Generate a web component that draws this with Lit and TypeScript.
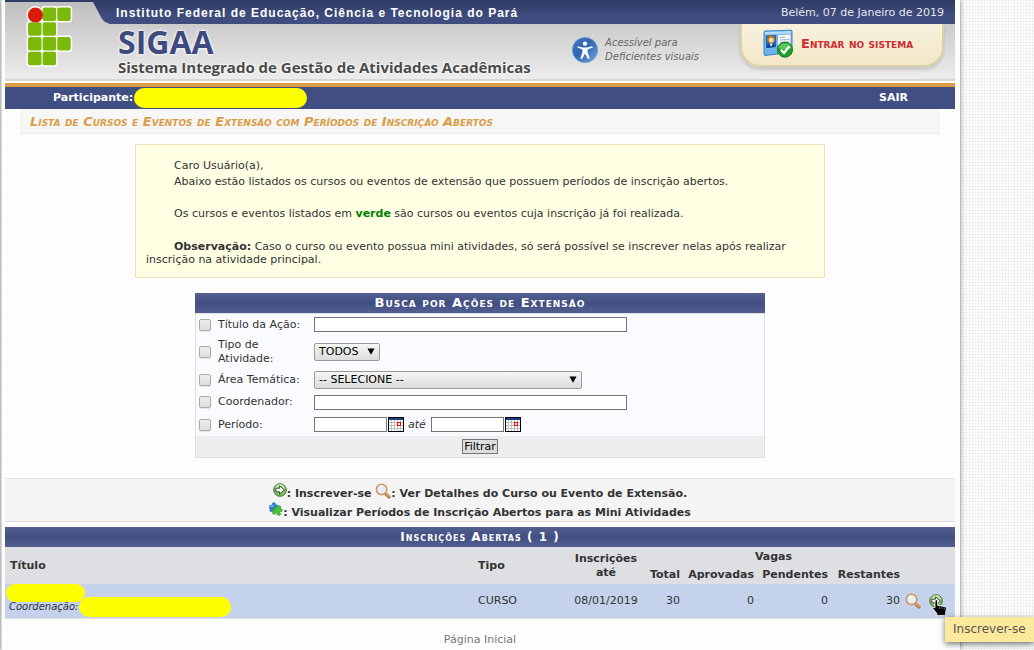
import { LitElement, html, svg, css } from "lit";
import { customElement } from "lit/decorators.js";

const arrowIcon = html`<svg class="icon" viewBox="0 0 14 14" width="14" height="14" aria-hidden="true">
  <circle cx="7" cy="7" r="6.3" fill="#7fc35e" stroke="#4d6b40" stroke-width="1" />
  <path d="M2 6 A5 5 0 0 1 12 6 Q7 4 2 6Z" fill="#b8e3a0" />
  <path d="M2.8 5.2H6.6V2.8L11.4 7L6.6 11.2V8.8H2.8Z" fill="#f4f8f2" stroke="#454d42" stroke-width="1" />
</svg>`;

const magnifierIcon = html`<svg class="icon" viewBox="0 0 16 16" width="16" height="16" aria-hidden="true">
  <path d="M10.4 10.6L14 14" stroke="#b5733a" stroke-width="3.2" stroke-linecap="round" />
  <path d="M11 10.8L14 13.6" stroke="#e6b27c" stroke-width="1.2" stroke-linecap="round" />
  <circle cx="6.6" cy="6.4" r="5.2" fill="#e9eef5" stroke="#cf9663" stroke-width="1.6" />
  <path d="M3.6 5.6A3.4 3.4 0 0 1 7 3" fill="none" stroke="#fff" stroke-width="1.2" />
</svg>`;

const puzzleIcon = html`<svg class="icon" viewBox="0 0 14 14" width="14" height="14" aria-hidden="true">
  <path d="M.5 3.5L3.5 3Q2.8.8 4.8.5Q6.8.6 6.2 2.6L9 3.3L8.5 8L6 9L1.2 9.8L.6 6Z" fill="#2f7fd0" stroke="#2465ad" stroke-width=".5" />
  <path d="M1.4 4.2L5 3.9" stroke="#8cc4f3" />
  <path d="M6.4 4.6L8.9 5.4Q9.1 3.4 11 3.8Q12.6 4.8 11.2 6.4L13.6 7.6L12.3 9.8Q11 8.9 10.3 10Q10.3 11.3 11.8 11.6L10.8 13.5L7.8 12.3Q8 10.4 6.6 10.8Q5.6 11.2 6 12.5L3.4 11.4L4.4 9Q3 8 3.9 6.9Q5 6 6 7.2Z" fill="#48c335" stroke="#2c8b25" stroke-width=".6" />
</svg>`;

const calendarIcon = html`<svg class="icon" viewBox="0 0 16 15" width="16" height="15" shape-rendering="crispEdges" aria-hidden="true">
  <rect width="16" height="15" fill="#000" />
  <rect x="1" y="1" width="14" height="2" fill="#1c3f80" />
  <rect x="1" y="3" width="14" height="11" fill="#fff" />
  <path d="M3.5 3V14M6.5 3V14M9.5 3V14M12.5 3V14M1 5.5H15M1 8.5H15M1 11.5H15" stroke="#c0c0c0" />
  <rect x="9.5" y="5.5" width="3" height="3" fill="#fff" stroke="#f00" />
</svg>`;

const squares: number[][] = [
  [42.6, 7.4], [57.2, 7.4],
  [28, 22.3], [42.6, 22.3],
  [28, 37], [42.6, 37], [57.2, 37],
  [28, 51.7], [42.6, 51.7],
];

const logo = html`<svg class="logo" viewBox="25 4 50 64" width="50" height="64" role="img" aria-label="Instituto Federal">
  <g fill="#fff" stroke="#fff" stroke-width="3" stroke-linejoin="round">
    ${squares.map(([x, y]) => svg`<rect x=${x} y=${y} width="13.5" height="13.5" rx="2" />`)}
    <circle cx="35.4" cy="15" r="7.5" />
  </g>
  ${squares.map(([x, y]) => svg`<rect x=${x} y=${y} width="13.5" height="13.5" rx="2" fill="#7db90a" />`)}
  <circle cx="35.4" cy="15" r="7.6" fill="#d81e0a" />
</svg>`;

const accessIcon = html`<svg viewBox="0 0 26 26" width="26" height="26" aria-hidden="true">
  <defs><linearGradient id="ab" x1="0" y1="0" x2="1" y2="1">
    <stop offset="0" stop-color="#4279bd" /><stop offset=".45" stop-color="#2f66b0" /><stop offset="1" stop-color="#7aa8de" />
  </linearGradient></defs>
  <circle cx="13" cy="13" r="12.6" fill="url(#ab)" stroke="#6f9bd0" stroke-width=".8" />
  <circle cx="13" cy="6.6" r="2.2" fill="#fff" />
  <path d="M5.6 9.2L11 10.4H15L20.4 9.2L20.7 10.6L15.5 12.4L15.7 15.5L17.6 21.6L16 22.1L13 16.5L10 22.1L8.4 21.6L10.3 15.5L10.5 12.4L5.3 10.6Z" fill="#fff" />
</svg>`;

const badgeIcon = html`<svg viewBox="0 0 32 30" width="32" height="30" aria-hidden="true">
  <path d="M2 3Q2 2 3 2L29 1.2Q30 1.2 30 2V19Q30 21 28 21L16 22V25L3 26.5Q2 26.5 2 25Z" fill="#6cb2ef" stroke="#3c83cd" />
  <path d="M3 3L29 2V4.6L3 5.6Z" fill="#b5dcfa" />
  <path d="M4 6.5L14 6V18L4 19Z" fill="#1d68bb" />
  <path d="M16 6L28.5 5.4V19L16 20Z" fill="#f5f7fa" />
  <path d="M17.5 8.5L23 8M18 11L27.5 10.5M18 13.5L27.5 13" stroke="#a7afb9" />
  <circle cx="9" cy="10.2" r="4" fill="#b96c14" />
  <circle cx="9.3" cy="11" r="2.5" fill="#ffd9a3" />
  <path d="M4.6 19Q5 14.4 9 14.4Q13 14.4 13.4 18Z" fill="#12458d" />
  <path d="M7.6 14.4L9.2 18L10.6 14.4Z" fill="#fff" />
  <circle cx="23" cy="20.7" r="7.6" fill="#1d9c28" stroke="#0e7119" stroke-width=".8" />
  <path d="M16.5 19A6.8 6.8 0 0 1 29.5 19Q23 22 16.5 19Z" fill="#5ac95a" />
  <path d="M19 20.7L22 24L27.4 17.2" fill="none" stroke="#fff" stroke-width="2.4" />
</svg>`;

const handCursor = html`<svg class="cursor" viewBox="0 0 15 17" width="15" height="17" aria-hidden="true">
  <path d="M3 1.5Q4.5 0 5.6 1.6V6.4L13 7.6Q14.5 8 14.4 9.6L13.6 14V16.4H4.8V14.4L.8 9.6Q1 7.6 3 8.8Z" fill="#000" stroke="#fff" stroke-width=".8" />
  <path d="M7.5 10V7.5M10 10.3V7.8M12.3 10.6V8.4" stroke="#999" stroke-width=".6" />
</svg>`;

@customElement("app-root")
export class AppRoot extends LitElement {
  static styles = css`
    :host {
      display: block;
      box-sizing: border-box;
      min-height: 100vh;
      padding: 0 74px 0 1px;
      overflow: hidden;
      font: 11px/14px "DejaVu Sans", Verdana, sans-serif;
      color: #333;
      background:
        repeating-linear-gradient(90deg, rgba(0, 0, 0, 0.04) 0 1px, transparent 1px 3px, rgba(0, 0, 0, 0.03) 3px 4px, transparent 4px 6px),
        repeating-linear-gradient(rgba(0, 0, 0, 0.04) 0 1px, transparent 1px 3px, rgba(0, 0, 0, 0.03) 3px 4px, transparent 4px 6px),
        #fdfdfd;
    }
    a { color: inherit; text-decoration: none; }
    .page {
      box-sizing: border-box;
      min-height: 100vh;
      padding: 0 5px 0 3px;
      border-left: 1px solid #d8d8d8;
      background: #fdfdfd;
      box-shadow: 0 0 5px rgba(0, 0, 0, 0.5);
    }
    .header {
      display: grid;
      grid-template-columns: 88px 1fr;
      border-top: 2px solid #2f3c66;
      box-sizing: border-box;
      height: 81px;
      border-bottom: 2px solid #d6d6d6;
      background: linear-gradient(#bfbfbf, #ececec);
    }
    .logo { margin: 2px 0 0 20px; }
    .topbar {
      display: flex;
      justify-content: space-between;
      align-items: center;
      height: 22px;
      padding: 0 11px 0 23px;
      color: #e4e6ee;
      background: linear-gradient(#303d66, #3e4b7d 60%, #404d80);
      clip-path: polygon(0 0, 100% 0, 100% 100%, 17px 100%, 12px 20px, 9px 17px);
    }
    .institute { font: bold 12px/20px "Liberation Sans", Arial, sans-serif; letter-spacing: 1px; color: #fff; }
    .brandrow { display: flex; align-items: flex-start; padding: 0 11px 0 25px; }
    .brand { flex: 1; font-family: "Open Sans", "Noto Sans", sans-serif; font-weight: 700; }
    .sigaa { margin: 0; font-size: 32px; line-height: 36px; color: #3e4a7e; text-shadow: 0 0 3px #fff, 0 0 3px #fff; }
    .subtitle { margin: 0; font-size: 15px; line-height: 14px; color: #4a4a4a; white-space: nowrap; text-shadow: 0 0 3px #fff, 0 0 3px #fff; }
    .access { display: flex; align-items: center; gap: 7px; margin: 12px 41px 0 0; font-style: italic; font-size: 10px; color: #666; }
    .login {
      display: flex;
      align-items: center;
      box-sizing: border-box;
      width: 204px;
      height: 43px;
      gap: 7px;
      padding: 0 0 2px 20px;
      border: 2px solid #ddd0a4;
      border-top: 0;
      border-radius: 0 0 20px 20px;
      background: linear-gradient(#f8f1dd, #f2e7c6);
      box-shadow: 0 3px 3px rgba(0, 0, 0, 0.12);
      font-size: 13px;
      font-weight: bold;
      font-variant: small-caps;
      color: #cc2c31;
    }
    .userbar {
      display: flex;
      justify-content: space-between;
      align-items: center;
      height: 22px;
      margin-top: 2px;
      padding: 0 47px 0 48px;
      border-top: 4px solid #d99d45;
      background: #404e82;
      color: #fff;
      font-weight: bold;
    }
    .who { display: flex; align-items: center; gap: 1px; }
    .mask { display: block; height: 20px; border-radius: 10px; background: #ff0; }
    .w-user { width: 173px; }
    .w-title { width: 79px; }
    .w-coord { width: 152px; }
    .pagetitle {
      margin: 0 15px;
      padding: 1px 10px 0;
      font-size: 13px;
      line-height: 23px;
      font-style: italic;
      font-variant: small-caps;
      color: #d99d45;
      background: #f7f7f7;
      border-bottom: 1px solid #ebebeb;
    }
    .notice {
      margin: 10px 130px 15px;
      padding: 13px 10px 11px;
      border: 1px solid #f0dfb8;
      background: #ffffe4;
    }
    .notice p { margin: 0 0 16px; text-indent: 28px; line-height: 16px; }
    .notice .greet { margin: 0; }
    .notice .obs { margin: 0; line-height: 13px; padding-top: 2px; }
    .green { color: #008000; }
    .bar {
      height: 20px;
      line-height: 20px;
      margin: 0;
      font-size: 12px;
      font-weight: bold;
      font-variant: small-caps;
      letter-spacing: 1px;
      text-align: center;
      color: #fff;
      background: linear-gradient(#53608f, #404e82 50%, #53608f);
    }
    .bar.large { font-size: 13px; }
    .search { margin: 0 190px 20px; }
    .fields {
      display: grid;
      grid-template-columns: 12px 89px 1fr;
      grid-template-rows: 21px 33px 23px 22px 23px;
      column-gap: 7px;
      align-items: center;
      padding: 0 3px;
      background: #fafbfe;
      border: solid #dedfe3;
      border-width: 1px 1px 0;
    }
    input, select, button { font: inherit; color: #000; margin: 0; box-sizing: border-box; }
    .check {
      appearance: none;
      width: 12px;
      height: 12px;
      border: 1px solid #ababab;
      border-radius: 2px;
      background: linear-gradient(#ececec, #dedede);
      box-shadow: 0 1px 1px rgba(0, 0, 0, 0.1);
    }
    .text { width: 313px; height: 15px; padding: 0 1px; border: 1px solid #757575; border-radius: 0; background: #fff; }
    .date { width: 73px; }
    .pick { position: relative; display: block; width: 66px; height: 18px; }
    .pick.wide { width: 268px; }
    .pick select {
      appearance: none;
      width: 100%;
      height: 100%;
      padding: 0 4px;
      border: 1px solid #999;
      border-radius: 2px;
      background: linear-gradient(#f6f6f6, #dcdcdc);
    }
    .pick svg { position: absolute; right: 5px; top: 5px; pointer-events: none; }
    .period { display: flex; align-items: center; gap: 1px; }
    .period em { margin: 0 4px 0 3px; }
    .iconbtn { display: block; padding: 0; border: 0; background: none; line-height: 0; }
    .icon { display: inline-block; }
    .submit {
      display: flex;
      justify-content: center;
      align-items: center;
      height: 21px;
      background: #eee;
      border: solid #dedfe3;
      border-width: 0 1px 1px;
    }
    .filter { height: 15px; padding: 0 1px; line-height: 13px; border: 1px solid #757575; background: #ddd; }
    .legend {
      margin-bottom: 5px;
      padding: 4px 0 0;
      font-weight: bold;
      line-height: 21px;
      background: #f4f4f4;
      border: solid #dedfe3;
      border-width: 1px 0;
    }
    .legend .line { display: flex; justify-content: center; height: 19px; white-space: pre; }
    .list { width: 100%; border-collapse: collapse; table-layout: fixed; }
    .list th, .list td { padding: 0 4px; }
    .list thead { background: #dedfe3; }
    .list th { text-align: right; }
    .list th.left { text-align: left; padding-left: 5px; }
    .list .center { text-align: center; }
    .list .first { height: 19px; }
    .list .second { height: 18px; }
    .list tbody td { height: 34px; text-align: right; background: #c4d2eb; border-bottom: 1px solid #dedfe3; }
    .list tbody td.name { text-align: left; padding: 0 0 0 1px; vertical-align: top; }
    .list tbody td.left { text-align: left; padding-left: 5px; }
    .list tbody td.center { text-align: center; }
    .list tbody td.act { padding: 0 0 0 1px; }
    .name .stack { display: flex; flex-direction: column; height: 33px; }
    .coord { display: flex; align-items: center; gap: 1px; height: 20px; margin-top: -5px; padding-left: 3px; font-style: italic; font-size: 10px; }
    .c-type { width: 96px; }
    .c-until { width: 74px; }
    .c-total { width: 41px; }
    .c-appr { width: 74px; }
    .c-pend { width: 74px; }
    .c-rest { width: 72px; }
    .c-a { width: 24px; }
    .c-b { width: 27px; }
    .hover { position: relative; width: 14px; }
    .cursor { position: absolute; left: 3px; top: 5px; }
    .tip {
      position: absolute;
      left: 16px;
      top: 23px;
      padding: 0 8px;
      font-size: 12px;
      line-height: 25px;
      white-space: nowrap;
      color: #555;
      background: #fde99c;
      box-shadow: 0 2px 6px rgba(0, 0, 0, 0.55);
    }
    .foot { margin-top: 14px; text-align: center; color: #777; }
  `;

  private arrow() {
    return html`<svg width="8" height="7" viewBox="0 0 8 7" aria-hidden="true"><path d="M.5 .5H7.5L4 6.8Z" fill="#000" /></svg>`;
  }

  render() {
    return html`<div class="page">
      <header>
        <div class="header">
          ${logo}
          <div>
            <div class="topbar">
              <span class="institute">Instituto Federal de Educação, Ciência e Tecnologia do Pará</span>
              <span>Belém, 07 de Janeiro de 2019</span>
            </div>
            <div class="brandrow">
              <div class="brand">
                <h1 class="sigaa">SIGAA</h1>
                <p class="subtitle">Sistema Integrado de Gestão de Atividades Acadêmicas</p>
              </div>
              <a class="access" href="#acessivel">${accessIcon}<span>Acessível para<br />Deficientes visuais</span></a>
              <a class="login" href="#entrar">${badgeIcon}<span>Entrar no sistema</span></a>
            </div>
          </div>
        </div>
        <div class="userbar">
          <span class="who">Participante:<span class="mask w-user"></span></span>
          <a href="#sair">SAIR</a>
        </div>
      </header>
      <main>
        <h2 class="pagetitle">Lista de Cursos e Eventos de Extensão com Períodos de Inscrição Abertos</h2>
        <section class="notice">
          <p class="greet">Caro Usuário(a),</p>
          <p>Abaixo estão listados os cursos ou eventos de extensão que possuem períodos de inscrição abertos.</p>
          <p>Os cursos e eventos listados em <b class="green">verde</b> são cursos ou eventos cuja inscrição já foi realizada.</p>
          <p class="obs"><b>Observação:</b> Caso o curso ou evento possua mini atividades, só será possível se inscrever nelas após realizar inscrição na atividade principal.</p>
        </section>
        <form class="search" @submit=${(e: Event) => e.preventDefault()}>
          <h3 class="bar large">Busca por Ações de Extensão</h3>
          <div class="fields">
            <input class="check" type="checkbox" aria-label="Filtrar por título" />
            <label for="titulo">Título da Ação:</label>
            <input class="text" id="titulo" type="text" />
            <input class="check" type="checkbox" aria-label="Filtrar por tipo" />
            <label for="tipo">Tipo de<br />Atividade:</label>
            <span class="pick"><select id="tipo"><option>TODOS</option></select>${this.arrow()}</span>
            <input class="check" type="checkbox" aria-label="Filtrar por área" />
            <label for="area">Área Temática:</label>
            <span class="pick wide"><select id="area"><option>-- SELECIONE --</option></select>${this.arrow()}</span>
            <input class="check" type="checkbox" aria-label="Filtrar por coordenador" />
            <label for="coord">Coordenador:</label>
            <input class="text" id="coord" type="text" />
            <input class="check" type="checkbox" aria-label="Filtrar por período" />
            <label for="inicio">Período:</label>
            <span class="period">
              <input class="text date" id="inicio" type="text" />
              <button class="iconbtn" type="button" aria-label="Data inicial">${calendarIcon}</button>
              <em>até</em>
              <input class="text date" type="text" aria-label="Data final" />
              <button class="iconbtn" type="button" aria-label="Escolher data final">${calendarIcon}</button>
            </span>
          </div>
          <div class="submit"><button class="filter" type="submit">Filtrar</button></div>
        </form>
        <section class="legend">
          <div class="line">${arrowIcon}<span>: Inscrever-se </span>${magnifierIcon}<span>: Ver Detalhes do Curso ou Evento de Extensão.</span></div>
          <div class="line">${puzzleIcon}<span>: Visualizar Períodos de Inscrição Abertos para as Mini Atividades</span></div>
        </section>
        <section>
          <h3 class="bar">Inscrições Abertas ( 1 )</h3>
          <table class="list">
            <colgroup>
              <col /><col class="c-type" /><col class="c-until" /><col class="c-total" /><col class="c-appr" />
              <col class="c-pend" /><col class="c-rest" /><col class="c-a" /><col class="c-b" />
            </colgroup>
            <thead>
              <tr class="first">
                <th class="left" rowspan="2">Título</th>
                <th class="left" rowspan="2">Tipo</th>
                <th class="center" rowspan="2">Inscrições até</th>
                <th class="center" colspan="4">Vagas</th>
                <th colspan="2" rowspan="2"></th>
              </tr>
              <tr class="second"><th>Total</th><th>Aprovadas</th><th>Pendentes</th><th>Restantes</th></tr>
            </thead>
            <tbody>
              <tr>
                <td class="name"><div class="stack"><span class="mask w-title"></span><span class="coord">Coordenação:<span class="mask w-coord"></span></span></div></td>
                <td class="left">CURSO</td>
                <td class="center">08/01/2019</td>
                <td>30</td><td>0</td><td>0</td><td>30</td>
                <td class="act"><button class="iconbtn" type="button" aria-label="Ver detalhes">${magnifierIcon}</button></td>
                <td class="act"><div class="hover"><button class="iconbtn" type="button" aria-label="Inscrever-se">${arrowIcon}</button>${handCursor}<span class="tip" role="tooltip">Inscrever-se</span></div></td>
              </tr>
            </tbody>
          </table>
        </section>
      </main>
      <footer class="foot"><a href="#inicio">Página Inicial</a></footer>
    </div>`;
  }
}
